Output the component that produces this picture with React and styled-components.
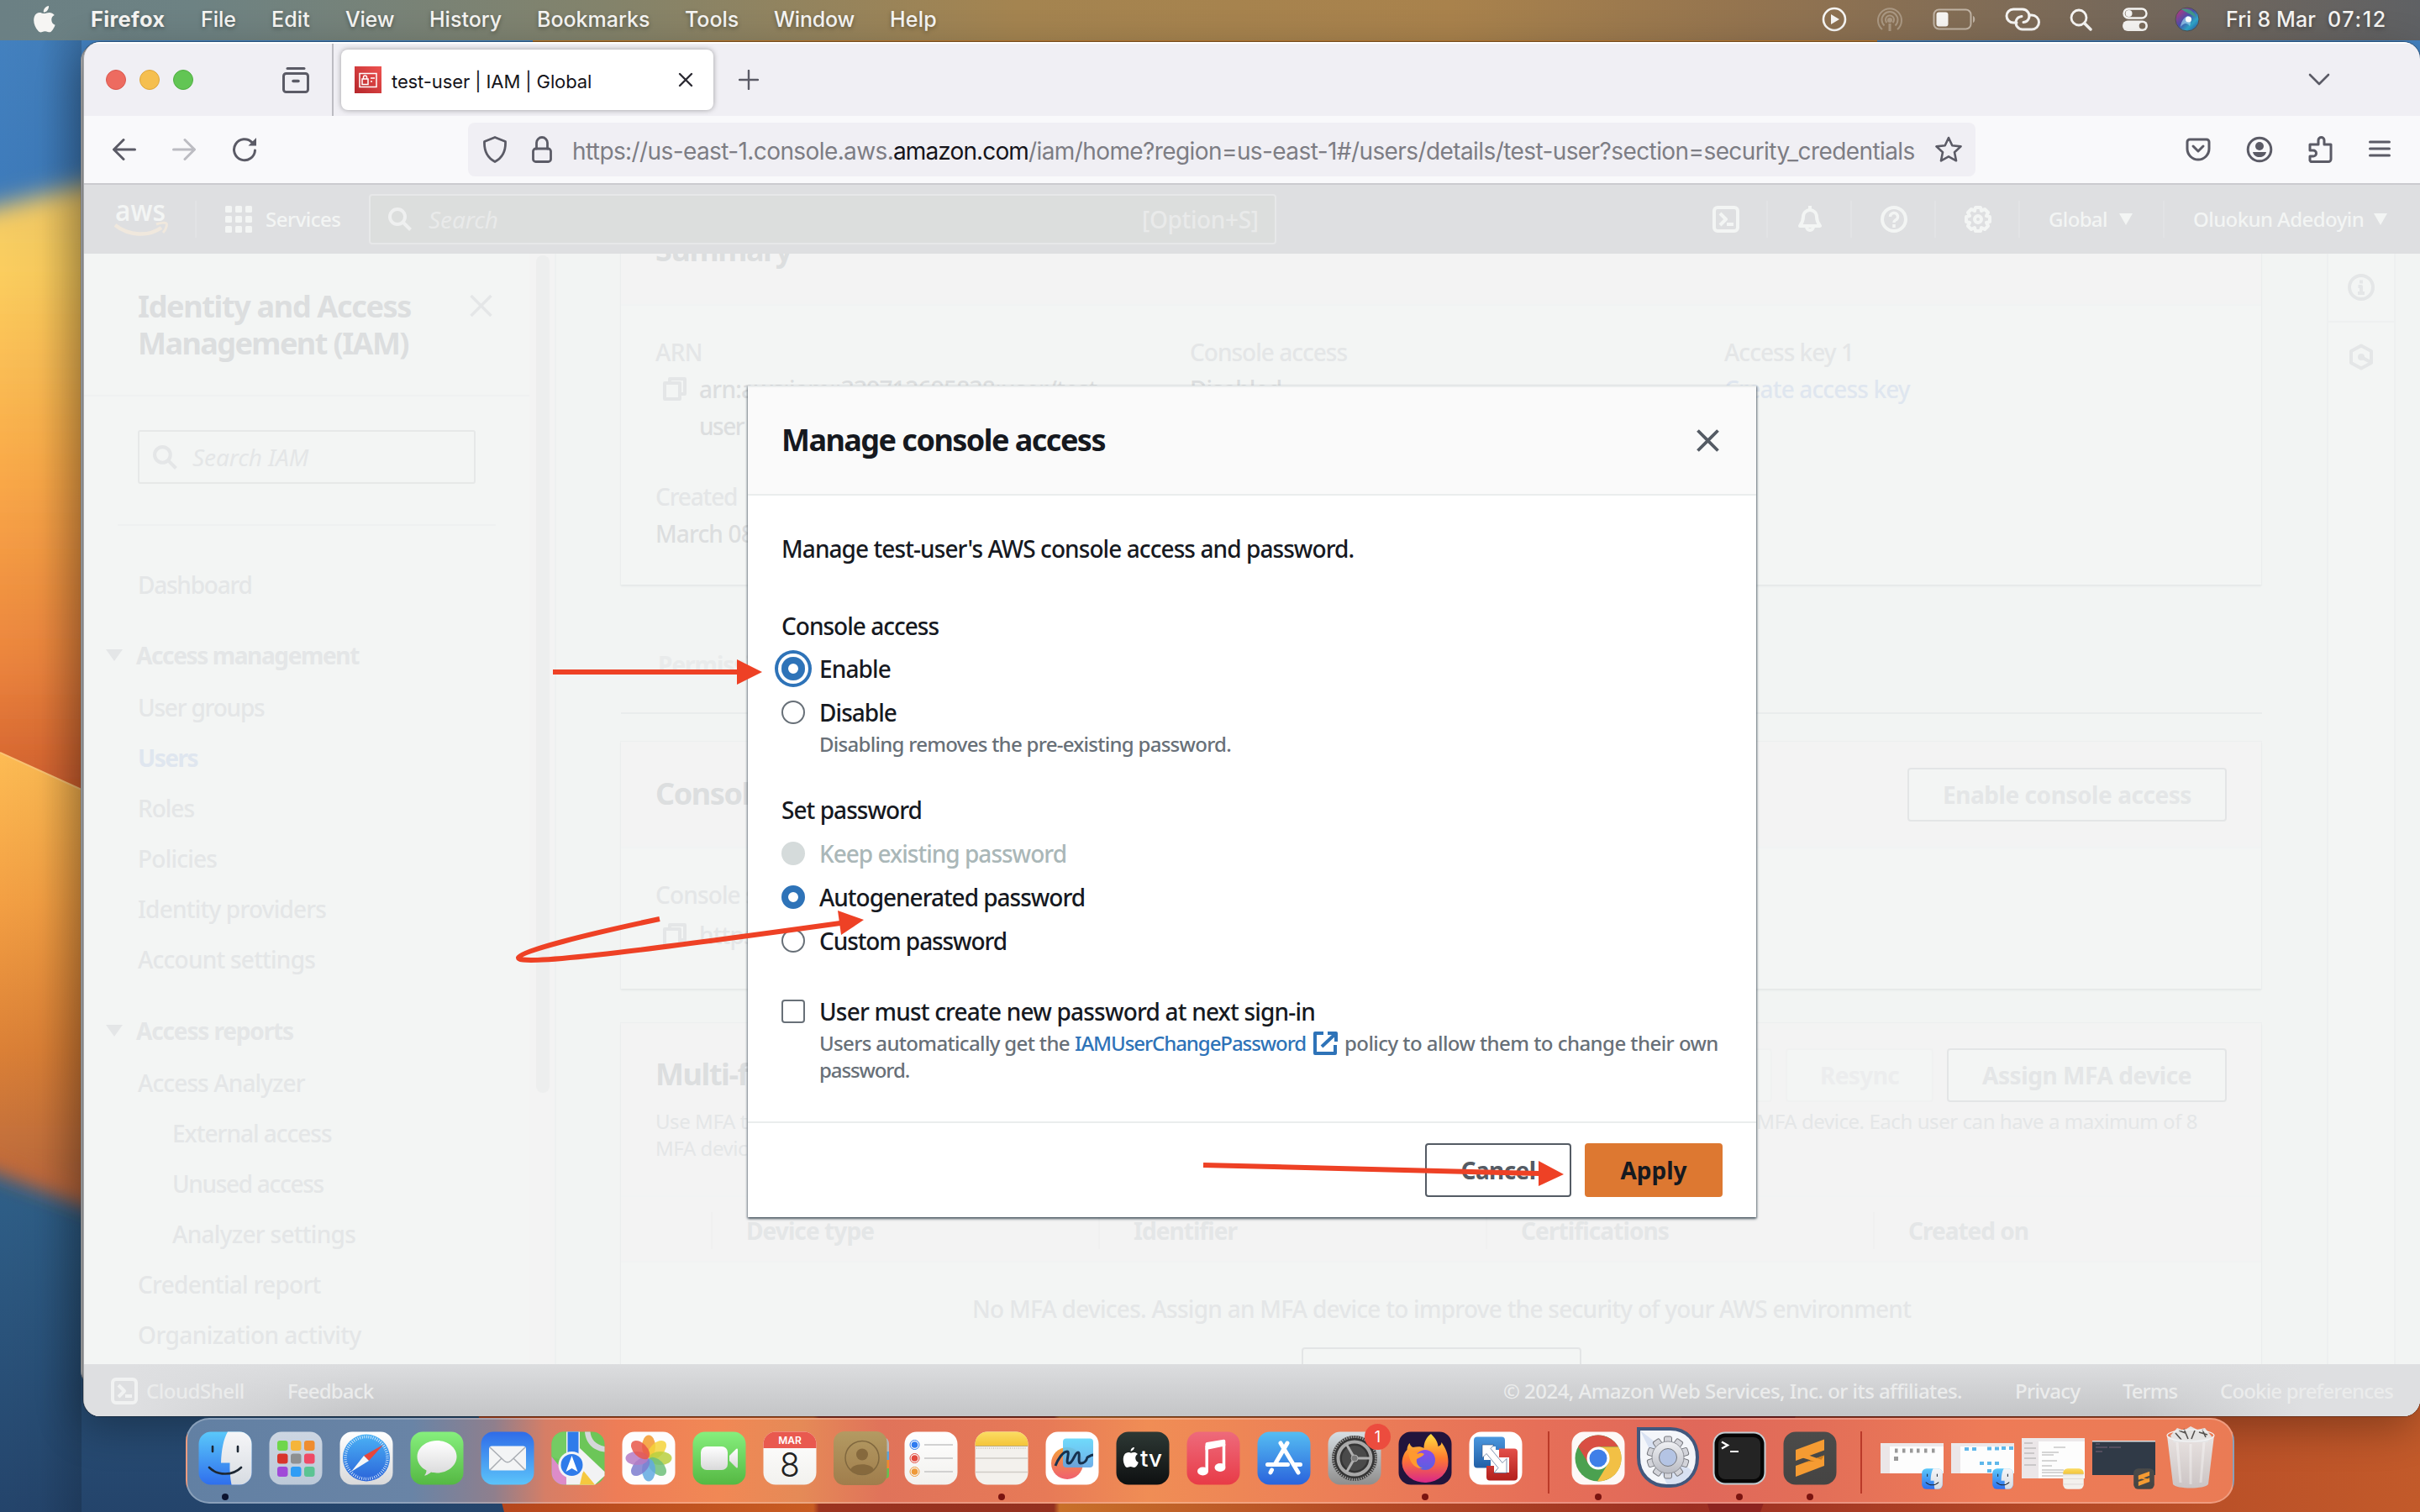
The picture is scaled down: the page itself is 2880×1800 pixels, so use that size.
import React from "react";
import styled, { createGlobalStyle, css } from "styled-components";

const EMBER = `"Noto Sans", "Open Sans", sans-serif`;
const SYSTEM = `Inter, Roboto, sans-serif`;

const Global = createGlobalStyle`
  * { box-sizing: border-box; }
  body { margin: 0; background: #27486c; font-family: ${EMBER}; }
`;

const c = {
  page: "#f2f4f3",
  card: "#f3f5f4",
  head: "#f3f3f3",
  line: "#ebeded",
  faint: "#e4e6e7",
  soft: "#dcdedf",
  link: "#dfe6ef",
  bar: "#dedfe1",
  barText: "#f3f5f4",
  ink: "#16191f",
  grey: "#687078",
  blue: "#2e73b8",
  slate: "#545b64",
  chrome: "#5b5b66",
  arrow: "#ee4125",
};

/* ---------- text ---------- */

const T = styled.span`
  display: block;
  flex: none;
  white-space: nowrap;
  width: ${(p) => (p.$w ? `${p.$w}px` : "auto")};
  margin-left: ${(p) => p.$ml || 0}px;
  font-family: ${(p) => (p.$system ? SYSTEM : EMBER)};
  font-size: ${(p) => p.$s || 28}px;
  line-height: ${(p) => p.$lh || 44}px;
  font-weight: ${(p) => p.$weight || (p.$b ? 700 : p.$system ? 400 : 500)};
  font-style: ${(p) => (p.$i ? "italic" : "normal")};
  letter-spacing: ${(p) => p.$ls ?? (p.$system ? 0 : p.$b ? -1 : -0.85)}px;
  color: ${(p) => p.$c || "inherit"};
`;
const Heading = styled(T).attrs({ $s: 36, $b: true })`
  position: relative;
  top: 2px;
`;
const Small = styled(T).attrs({ $s: 24 })``;

/* ---------- desktop ---------- */

const Desktop = styled.div`
  position: relative;
  width: 2880px;
  height: 1800px;
  overflow: hidden;
`;

const WallpaperSvg = styled.svg`
  position: absolute;
  inset: 0;
`;

function Wallpaper() {
  return (
    <WallpaperSvg width="2880" height="1800" viewBox="0 0 2880 1800">
      <defs>
        <linearGradient id="sky" x1="0" y1="0" x2="0" y2="1">
          <stop offset="0" stopColor="#4482c0" />
          <stop offset="0.14" stopColor="#3d7aba" />
          <stop offset="0.76" stopColor="#30628b" />
          <stop offset="1" stopColor="#24446b" />
        </linearGradient>
        <linearGradient id="petalA" x1="0" y1="220" x2="0" y2="930" gradientUnits="userSpaceOnUse">
          <stop offset="0" stopColor="#f0c968" />
          <stop offset="0.14" stopColor="#fbce5e" />
          <stop offset="0.5" stopColor="#f9a747" />
          <stop offset="0.8" stopColor="#eb843d" />
          <stop offset="1" stopColor="#d4622f" />
        </linearGradient>
        <linearGradient id="petalB" x1="0" y1="900" x2="0" y2="1400" gradientUnits="userSpaceOnUse">
          <stop offset="0" stopColor="#fdbb53" />
          <stop offset="0.35" stopColor="#f39f43" />
          <stop offset="0.7" stopColor="#db8036" />
          <stop offset="1" stopColor="#bb6a3c" />
        </linearGradient>
        <linearGradient id="shade" x1="0" y1="0" x2="1" y2="0">
          <stop offset="0" stopColor="#000" stopOpacity="0" />
          <stop offset="0.5" stopColor="#000" stopOpacity="0.02" />
          <stop offset="1" stopColor="#000" stopOpacity="0.16" />
        </linearGradient>
        <linearGradient id="top" x1="0" y1="0" x2="2880" y2="0" gradientUnits="userSpaceOnUse">
          <stop offset="0" stopColor="#6b8084" />
          <stop offset="0.08" stopColor="#6d8283" />
          <stop offset="0.25" stopColor="#83836b" />
          <stop offset="0.42" stopColor="#a48450" />
          <stop offset="0.6" stopColor="#a9824c" />
          <stop offset="0.72" stopColor="#94744f" />
          <stop offset="0.85" stopColor="#7b6a58" />
          <stop offset="1" stopColor="#5f6164" />
        </linearGradient>
        <linearGradient id="floor" x1="590" y1="0" x2="2880" y2="0" gradientUnits="userSpaceOnUse">
          <stop offset="0" stopColor="#b5461d" />
          <stop offset="0.165" stopColor="#c85c22" />
          <stop offset="0.168" stopColor="#9c3420" />
          <stop offset="0.29" stopColor="#93301f" />
          <stop offset="0.293" stopColor="#c8702a" />
          <stop offset="0.45" stopColor="#b44a25" />
          <stop offset="0.62" stopColor="#9c2f22" />
          <stop offset="0.8" stopColor="#b44826" />
          <stop offset="1" stopColor="#c25a2a" />
        </linearGradient>
        <filter id="soft" x="-50%" y="-10%" width="200%" height="120%">
          <feGaussianBlur stdDeviation="14" />
        </filter>
      </defs>
      <rect width="2880" height="1800" fill="url(#sky)" />
      <path d="M-60 260 L160 205 V1450 L-60 1370Z" fill="url(#petalA)" filter="url(#soft)" />
      <path d="M-60 1000 H160 V1450 L-60 1365Z" fill="url(#petalB)" filter="url(#soft)" />
      <path d="M0 896 L97 940 V1340 H0Z" fill="url(#petalB)" />
      <path d="M0 896 L97 940" stroke="#fbc474" strokeWidth="2" />
      <path d="M560 1650 H2880 V1800 H600Z" fill="url(#floor)" />
      <path d="M1990 1650 H2150 L2095 1800 H2035Z" fill="#8d2420" />
      <rect y="48" width="97" height="1752" fill="url(#shade)" />
      <rect x="634" y="46" width="1600" height="8" fill="#b8782f" />
      <rect width="2880" height="48" fill="url(#top)" />
    </WallpaperSvg>
  );
}

/* ---------- macOS menu bar ---------- */

const MenuBar = styled.div`
  position: relative;
  display: flex;
  align-items: center;
  justify-content: space-between;
  height: 48px;
  padding: 0 37px 2px 40px;
  color: #f6f5f3;
  text-shadow: 0 2px 5px rgba(0, 0, 0, 0.35);
`;
const MenuItems = styled.div`
  display: flex;
  align-items: center;
  gap: 42px;
`;
const StatusItems = styled.div`
  display: flex;
  align-items: center;
`;
const Slot = styled.div`
  display: flex;
  align-items: center;
  width: ${(p) => p.$w}px;
`;

const MENUS = [
  ["Firefox", 89, 0.3], ["File", 42, 0], ["Edit", 46, 0.15], ["View", 58, -0.2], ["History", 86, 0],
  ["Bookmarks", 134, 0], ["Tools", 64, 0], ["Window", 96, -0.2], ["Help", 56, 0.2],
];

function TopBar() {
  return (
    <MenuBar>
      <MenuItems>
        <svg width="26" height="32" viewBox="0 0 26 32" fill="#f6f5f3">
          <path d="M18 0c.3 2-.6 4-1.7 5.400-1.200 1.400-2.900 2.400-4.500 2.200-.3-1.900.6-4 1.700-5.200C14.700 1 16.500.2 18 0z" />
          <path d="M24.800 11c-2.600 1.500-3.600 3.200-3.500 5.700.1 2.900 1.600 4.900 4.300 6-.9 2.600-2.100 4.800-3.700 6.800-1.500 1.900-2.900 2.300-5 1.400-2.400-1-4.300-1-6.600.1-1.900.9-3.400.5-4.900-1.200C1.300 25.300-1 18.300.800 13 2.200 9 6 7.300 9.400 8.500c2.300.8 3.800.8 6 0 3.400-1.300 7.100-.6 9.400 2.500z" />
        </svg>
        {MENUS.map(([t, w, ls], i) => (
          <T key={t} $system $s={i ? 25 : 25.5} $w={w} $ls={ls} $weight={i ? 500 : 700}>{t}</T>
        ))}
      </MenuItems>
      <StatusItems>
        <Slot $w={82}>
          <svg width="30" height="30" viewBox="0 0 30 30">
            <circle cx="15" cy="15" r="13" fill="none" stroke="#f6f5f3" strokeWidth="2.600" />
            <path d="M11 9l10 6-10 6z" fill="#f6f5f3" />
          </svg>
        </Slot>
        <Slot $w={50}>
          <svg width="32" height="30" viewBox="0 0 32 30" fill="none" stroke="#b9aa98" strokeWidth="2" opacity=".7" transform="translate(-17 0)">
            <path d="M7 27a14 14 0 1 1 18 0M9.500 22.500a9.500 9.500 0 1 1 13 0M12.500 19a5 5 0 1 1 7 0" />
            <circle cx="16" cy="16" r="2" fill="#b9aa98" />
            <path d="M16 20v9" strokeWidth="3" />
          </svg>
        </Slot>
        <Slot $w={85}>
          <svg width="52" height="26" viewBox="0 0 52 26">
            <rect x="1.500" y="1.500" width="44" height="23" rx="6" fill="none" stroke="#c0b3a4" strokeWidth="2" />
            <rect x="4.500" y="4.500" width="14" height="17" rx="3" fill="#f6f5f3" />
            <path d="M48 9c3 1 3 7 0 8z" fill="#c0b3a4" />
          </svg>
        </Slot>
        <Slot $w={78}>
          <svg width="44" height="28" viewBox="0 0 44 28" fill="none" stroke="#f6f5f3" strokeWidth="3" strokeLinecap="round">
            <path d="M15 18h-4a8 8 0 0 1 0-16h11a8 8 0 0 1 7.600 10.500c-.8 2.600-3 4.600-6.600 5" />
            <path d="M30 9h3a8 8 0 0 1 0 17H22a8 8 0 0 1-7.600-10.500c.8-2.600 3-4.600 6.600-5" />
          </svg>
        </Slot>
        <Slot $w={63}>
          <svg width="27" height="27" viewBox="0 0 27 27" fill="none" stroke="#f6f5f3" strokeWidth="2.800" strokeLinecap="round">
            <circle cx="11" cy="11" r="9" />
            <path d="M18 18l7 7" strokeWidth="3.500" />
          </svg>
        </Slot>
        <Slot $w={62}>
          <svg width="30" height="28" viewBox="0 0 30 28">
            <rect x="1.500" y="1.500" width="27" height="11" rx="5.500" fill="none" stroke="#f6f5f3" strokeWidth="2.400" />
            <circle cx="7.500" cy="7" r="4" fill="#f6f5f3" />
            <rect x="0" y="15.500" width="30" height="12.500" rx="6.200" fill="#f6f5f3" />
            <circle cx="23.500" cy="21.700" r="3.800" fill="#7b6c5c" />
          </svg>
        </Slot>
        <Slot $w={61}>
          <svg width="30" height="30" viewBox="0 0 30 30">
            <defs>
              <linearGradient id="siri" x1="0" y1="0" x2="1" y2="1">
                <stop offset="0" stopColor="#d5326e" />
                <stop offset=".45" stopColor="#4a4fae" />
                <stop offset=".7" stopColor="#2fa7c8" />
                <stop offset="1" stopColor="#2a3fa0" />
              </linearGradient>
            </defs>
            <circle cx="15" cy="15" r="14" fill="url(#siri)" stroke="#4f5050" />
            <path d="M8 3c8-2 17 3 17 10-6-5-12-6-17-10z" fill="#3f9d86" opacity=".9" />
            <path d="M7 24c1-8 5-12 9-13 3 3 4 8 2 12-4-5-7-3-11 1z" fill="#9fd8f4" opacity=".7" />
            <circle cx="16.500" cy="15" r="3.500" fill="#fff" />
          </svg>
        </Slot>
        <Slot $w={121}><T $system $s={25} $weight={500} $ls={0.1}>Fri 8 Mar</T></Slot>
        <T $system $s={25} $weight={500} $w={73} $ls={1.7}>07:12</T>
      </StatusItems>
    </MenuBar>
  );
}

/* ---------- browser window ---------- */

const BackWindow = styled.div`
  position: absolute;
  left: 96px;
  top: 54px;
  width: 60px;
  height: 1596px;
  border-radius: 18px;
  background: #c9cacc;
  border-left: 1px solid #8f9194;
`;
const Window = styled.div`
  position: absolute;
  left: 99px;
  top: 50px;
  width: 2781px;
  height: 1636px;
  border-radius: 20px;
  overflow: hidden;
  display: flex;
  flex-direction: column;
  background: #f0eff4;
  border-left: 1px solid #a9abae;
  box-shadow: 0 0 0 1px rgba(0, 0, 0, 0.3), -6px 14px 50px rgba(0, 0, 0, 0.3);
`;
const TabStrip = styled.div`
  display: flex;
  align-items: center;
  height: 88px;
  flex: none;
  border-top: 2px solid #fff;
  padding-left: 26px;
`;
const Light = styled.i`
  width: 24px;
  height: 24px;
  flex: none;
  margin-right: 16px;
  border-radius: 50%;
  background: ${(p) => p.$c};
  border: 1px solid ${(p) => p.$edge};
`;
const ViewButton = styled.div`
  display: flex;
  align-items: center;
  margin-left: 90px;
  width: 61px;
  height: 86px;
  margin-right: 9px;
  border-right: 2px solid #bcbcc2;
  flex: none;
`;
const Tab = styled.div`
  display: flex;
  align-items: center;
  width: 443px;
  height: 72px;
  padding: 0 24px 0 16px;
  border-radius: 8px;
  background: #fff;
  box-shadow: 0 0 6px rgba(0, 0, 0, 0.35);
  gap: 12px;
  & > svg:last-child { margin-left: auto; }
  & > span { margin-top: 3px; }
`;
const NewTab = styled.div`
  margin-left: 30px;
  display: flex;
`;
const TabsMenu = styled.div`
  margin-left: auto;
  margin-right: 107px;
  display: flex;
`;
const Toolbar = styled.div`
  display: flex;
  align-items: center;
  height: 82px;
  flex: none;
  background: #f9f9fb;
  border-bottom: 2px solid #cbcbcf;
  padding-left: 34px;
`;
const NavButtons = styled.div`
  display: flex;
  align-items: center;
  gap: 43px;
  width: 423px;
`;
const UrlBar = styled.div`
  display: flex;
  align-items: center;
  width: 1794px;
  height: 64px;
  border-radius: 8px;
  background: #f0eff4;
  padding: 0 16px;
`;
const UrlIcons = styled.div`
  display: flex;
  align-items: center;
  gap: 28px;
  width: 108px;
  flex: none;
`;
const UrlText = styled.div`
  display: flex;
  color: #7d7d84;
  width: 1622px;
  padding-top: 3px;
`;
const ToolbarActions = styled.div`
  display: flex;
  align-items: center;
  gap: 42px;
  margin-left: auto;
  margin-right: 35px;
`;

const line = (extra) => ({ fill: "none", stroke: c.chrome, strokeWidth: 3, strokeLinecap: "round", strokeLinejoin: "round", ...extra });

function Browser() {
  return (
    <>
      <TabStrip>
        <Light $c="#ed6b60" $edge="#d9584f" />
        <Light $c="#f5bf4f" $edge="#dea63b" />
        <Light $c="#62c554" $edge="#4fae41" />
        <ViewButton>
          <svg width="32" height="32" viewBox="0 0 32 32" {...line()}>
            <path d="M6 2.500h20" /><rect x="1.500" y="8.500" width="29" height="22" rx="3" /><path d="M13 17.500h6" strokeWidth="3.500" />
          </svg>
        </ViewButton>
        <Tab>
          <svg width="32" height="32" viewBox="0 0 32 32">
            <defs><linearGradient id="iam" x1="0" y1="1" x2="1" y2="0"><stop offset="0" stopColor="#b5262b" /><stop offset="1" stopColor="#ef5350" /></linearGradient></defs>
            <rect width="32" height="32" fill="url(#iam)" />
            <g fill="none" stroke="#fff" strokeWidth="1.500">
              <rect x="6" y="8.500" width="20" height="16" /><rect x="9" y="15" width="7" height="6.500" /><path d="M10.500 15v-2a2 2 0 0 1 4 0v2M19 14h5M19 18h2" />
            </g>
          </svg>
          <T $system $s={22} $w={239} $ls={-0.1} $c="#15141a">test-user | IAM | Global</T>
          <svg width="18" height="18" viewBox="0 0 18 18" {...line({ stroke: "#2b2a33", strokeWidth: 2.4 })}><path d="M2 2l14 14M16 2L2 16" /></svg>
        </Tab>
        <NewTab><svg width="24" height="24" viewBox="0 0 24 24" {...line({ strokeWidth: 2.4 })}><path d="M12 1v22M1 12h22" /></svg></NewTab>
        <TabsMenu><svg width="26" height="16" viewBox="0 0 26 16" {...line({ strokeWidth: 2.6 })}><path d="M2 2l11 11L24 2" /></svg></TabsMenu>
      </TabStrip>
      <Toolbar>
        <NavButtons>
          <svg width="28" height="26" viewBox="0 0 28 26" {...line()}><path d="M26.500 13H2M13 1.500L1.500 13 13 24.500" /></svg>
          <svg width="28" height="26" viewBox="0 0 28 26" {...line({ stroke: "#bcbcc2" })}><path d="M1.500 13H26M15 1.500L26.500 13 15 24.500" /></svg>
          <svg width="30" height="30" viewBox="0 0 30 30" {...line()}>
            <path d="M27.500 16a12.500 12.500 0 1 1-3.500-9.500" /><path d="M29 1v9.500H19.500z" fill={c.chrome} stroke="none" />
          </svg>
        </NavButtons>
        <UrlBar>
          <UrlIcons>
            <svg width="32" height="32" viewBox="0 0 32 32" {...line({ strokeWidth: 2.8 })}><path d="M16 1.500l12.500 5C29 18 25 26 16 30.500 7 26 3 18 3.500 6.500z" /></svg>
            <svg width="24" height="32" viewBox="0 0 24 32" {...line({ strokeWidth: 2.8 })}><rect x="1.500" y="15" width="21" height="15.500" rx="3" /><path d="M5.500 15V8a6.500 6.500 0 0 1 13 0v7" /></svg>
          </UrlIcons>
          <UrlText>
            <T $system $s={28} $w={382} $ls={-0.6}>https://us-east-1.console.aws.</T>
            <T $system $s={28} $w={161} $ls={-0.88} $c="#15141a">amazon.com</T>
            <T $system $s={28} $w={1055} $ls={-0.59}>/iam/home?region=us-east-1#/users/details/test-user?section=security_credentials</T>
          </UrlText>
          <svg width="32" height="32" viewBox="0 0 32 32" {...line({ strokeWidth: 2.6 })}>
            <path d="M16 2l4.300 9.200 10.200 1.200-7.500 6.900 2 10L16 24.400l-9 4.900 2-10-7.500-6.900 10.200-1.200z" />
          </svg>
        </UrlBar>
        <ToolbarActions>
          <svg width="30" height="28" viewBox="0 0 30 28" {...line()}><path d="M5 2h20a3 3 0 0 1 3 3v8a13 13 0 0 1-26 0V5a3 3 0 0 1 3-3z" /><path d="M9 10l6 6 6-6" /></svg>
          <svg width="32" height="32" viewBox="0 0 32 32"><circle cx="16" cy="16" r="13.800" fill="none" stroke={c.chrome} strokeWidth="3" /><circle cx="16" cy="12" r="5" fill={c.chrome} /><path d="M8 19h16c-1 4-4 6-8 6s-7-2-8-6z" fill={c.chrome} /></svg>
          <svg width="30" height="32" viewBox="0 0 30 32" {...line()}><path d="M3 30.500h21a3 3 0 0 0 3-3V10h-8V5a3.500 3.500 0 0 0-7 0v5H2v7h4a3.500 3.500 0 0 1 0 7H2v5z" /></svg>
          <svg width="26" height="22" viewBox="0 0 26 22" {...line()}><path d="M1.500 2h23M1.500 10h23M1.500 18h23" /></svg>
        </ToolbarActions>
      </Toolbar>
    </>
  );
}

/* ---------- AWS console page ---------- */

const Page = styled.div`
  position: relative;
  display: flex;
  flex-direction: column;
  height: 1466px;
  background: ${c.page};
`;
const AwsHeader = styled.div`
  display: flex;
  align-items: center;
  height: 82px;
  flex: none;
  background: ${c.bar};
  color: ${c.barText};
  padding-left: 36px;
`;
const Sep = styled.i`
  width: 2px;
  height: 44px;
  background: #e2e3e5;
  margin: 0 ${(p) => p.$r}px 0 ${(p) => p.$l}px;
`;
const SearchBox = styled.div`
  display: flex;
  align-items: center;
  width: 1080px;
  height: 60px;
  margin-left: 34px;
  padding: 0 19px 0 21px;
  border: 2px solid #e7e8e9;
  border-radius: 4px;
  background: #dcdedd;
  color: #e9eaea;
`;
const SearchHint = styled.div`
  flex: 1;
  margin-left: 20px;
`;
const HeaderTools = styled.div`
  display: flex;
  align-items: center;
  margin-left: 519px;
`;
const Caret = styled.i`
  margin-left: ${(p) => p.$ml || 0}px;
  border-left: ${(p) => p.$s || 8}px solid transparent;
  border-right: ${(p) => p.$s || 8}px solid transparent;
  border-top: 14px solid currentColor;
`;

const stroke = (color, w = 4) => ({ fill: "none", stroke: color, strokeWidth: w, strokeLinejoin: "round" });

const ShellIcon = ({ color }) => (
  <svg width="32" height="32" viewBox="0 0 32 32" {...stroke(color)}>
    <rect x="2" y="2" width="28" height="28" rx="4" /><path d="M9 9l7 7-7 7" /><path d="M17 22h8" />
  </svg>
);
const CopyIcon = () => (
  <svg width="28" height="28" viewBox="0 0 28 28" {...stroke(c.faint, 4)}>
    <rect x="2" y="7" width="18" height="19" /><path d="M8 7V2h18v18h-6" />
  </svg>
);
const SearchIcon = ({ color, size = 28 }) => (
  <svg width={size} height={size} viewBox="0 0 28 28" {...stroke(color, 4)}>
    <circle cx="11" cy="11" r="9" /><path d="M17.500 17.500l9 9" />
  </svg>
);

function Header() {
  return (
    <AwsHeader>
      <svg width="64" height="44" viewBox="0 0 64 44">
        <text x="1" y="24" textLength="60" lengthAdjust="spacingAndGlyphs" fontFamily="Open Sans" fontWeight="600" fontSize="35" fill={c.barText}>aws</text>
        <path d="M1 29c16 13 40 14 55 3" fill="none" stroke="#f0e8dd" strokeWidth="4.500" />
        <path d="M50 28c5-2 11-2 12-1s0 7-4 11" fill="none" stroke="#f0e8dd" strokeWidth="3" />
      </svg>
      <Sep $l={32} $r={34} />
      <svg width="32" height="32" viewBox="0 0 32 32" fill={c.barText}>
        {[0, 12, 24].map((y) => [0, 12, 24].map((x) => <rect key={`${x}-${y}`} x={x} y={y} width="8" height="8" rx="1.500" />))}
      </svg>
      <Small $ml={16} $w={89} $ls={-0.5}>Services</Small>
      <SearchBox>
        <SearchIcon color="#eff0f0" />
        <SearchHint><T $i $w={84} $ls={-0.1} $weight={400}>Search</T></SearchHint>
        <T $w={139} $ls={-0.35}>[Option+S]</T>
      </SearchBox>
      <HeaderTools>
        <ShellIcon color={c.barText} />
        <Sep $l={32} $r={34} />
        <svg width="32" height="32" viewBox="0 0 32 32" {...stroke(c.barText)}><path d="M4 24c3-4 4-6 4-11a8 8 0 0 1 16 0c0 5 1 7 4 11z" /><path d="M16 0v6M12 25a4 4 0 0 0 8 0" /></svg>
        <Sep $l={32} $r={34} />
        <svg width="32" height="32" viewBox="0 0 32 32" {...stroke(c.barText)}><circle cx="16" cy="16" r="14" /><path d="M11.500 13a4.500 4.500 0 1 1 6 4.200c-1 .5-1.500 1-1.500 2.800M16 22v4" strokeWidth="3.500" /></svg>
        <Sep $l={32} $r={34} />
        <svg width="32" height="32" viewBox="0 0 32 32" {...stroke(c.barText)}><path d="M13 2h6l1 4 4-2 4 4-2 4 4 1v6l-4 1 2 4-4 4-4-2-1 4h-6l-1-4-4 2-4-4 2-4-4-1v-6l4-1-2-4 4-4 4 2z" /><circle cx="16" cy="16" r="4" /></svg>
        <Sep $l={32} $r={34} />
        <Small $w={70} $ls={-0.65}>Global</Small>
        <Caret $ml={14} />
        <Sep $l={36} $r={34} />
        <Small $w={203} $ls={-0.58}>Oluokun Adedoyin</Small>
        <Caret $ml={12} />
      </HeaderTools>
    </AwsHeader>
  );
}

const Body = styled.div`
  display: flex;
  height: 1322px;
  flex: none;
  overflow: hidden;
`;
const Sidebar = styled.nav`
  width: 530px;
  flex: none;
  background: ${c.card};
`;
const SideTitle = styled.div`
  display: flex;
  justify-content: space-between;
  height: 170px;
  padding: 39px 44px 0 64px;
  border-bottom: 2px solid #eff1f1;
  & > svg { margin-top: 10px; }
`;
const SideSearch = styled.div`
  margin: 0 40px 40px;
  padding: 40px 24px 48px;
  border-bottom: 2px solid #eff1f1;
`;
const SideInput = styled.div`
  display: flex;
  align-items: center;
  gap: 18px;
  height: 64px;
  width: 402px;
  padding-left: 16px;
  border: 2px solid #e6e8e8;
  border-radius: 3px;
`;
const SideRow = styled.div`
  display: flex;
  align-items: center;
  gap: 16px;
  height: 60px;
  margin-top: ${(p) => p.$gap || 0}px;
  padding-left: ${(p) => (p.$group ? 26 : p.$nested ? 105 : 64)}px;
  color: ${(p) => (p.$active ? c.link : c.faint)};
`;
const Scroll = styled.div`
  width: 32px;
  flex: none;
  background: #f3f3f3;
  border-right: 2px solid #eef0f0;
  padding: 2px 0 0 8px;
`;
const Thumb = styled.div`
  width: 16px;
  height: 997px;
  border-radius: 8px;
  background: #edeeee;
`;

const NAV = [
  { t: "Dashboard", ls: -1.24 },
  { t: "Access management", ls: -1.37, group: true, gap: 24 },
  { t: "User groups", ls: -1.21, gap: 2 },
  { t: "Users", ls: -1.5, active: true },
  { t: "Roles", ls: -1 },
  { t: "Policies", ls: -0.77 },
  { t: "Identity providers", ls: -0.79 },
  { t: "Account settings", ls: -0.76 },
  { t: "Access reports", ls: -1.14, group: true, gap: 25 },
  { t: "Access Analyzer", ls: -0.88, gap: 2 },
  { t: "External access", ls: -1.01, nested: true },
  { t: "Unused access", ls: -1.32, nested: true },
  { t: "Analyzer settings", ls: -0.7, nested: true },
  { t: "Credential report", ls: -0.71 },
  { t: "Organization activity", ls: -0.56 },
];

function SideNav() {
  return (
    <>
      <Sidebar>
        <SideTitle>
          <div>
            <Heading $c={c.soft} $w={325} $ls={-1.33}>Identity and Access</Heading>
            <Heading $c={c.soft} $w={325} $ls={-1.56}>Management (IAM)</Heading>
          </div>
          <svg width="27" height="26" viewBox="0 0 27 26" {...stroke(c.faint, 3.5)}><path d="M1.500 1l24 24M25.500 1l-24 24" /></svg>
        </SideTitle>
        <SideSearch>
          <SideInput>
            <SearchIcon color={c.faint} size={29} />
            <T $i $c={c.faint} $weight={400} $ls={-0.1}>Search IAM</T>
          </SideInput>
        </SideSearch>
        {NAV.map((n) => (
          <SideRow key={n.t} $gap={n.gap} $group={n.group} $nested={n.nested} $active={n.active}>
            {n.group && <Caret $s={10} />}
            <T $b={n.group || n.active} $ls={n.ls}>{n.t}</T>
          </SideRow>
        ))}
      </Sidebar>
      <Scroll><Thumb /></Scroll>
    </>
  );
}

const Main = styled.main`
  width: 2107px;
  flex: none;
  overflow: hidden;
  padding: 0 77px;
`;
const Card = styled.section`
  width: 1952px;
  margin-top: ${(p) => p.$top || 0}px;
  height: ${(p) => p.$h}px;
  background: ${c.card};
  box-shadow: 0 2px 2px #e5e8e8, 0 0 0 1px #edefef;
`;
const CardHead = styled.div`
  display: flex;
  justify-content: space-between;
  height: ${(p) => p.$h}px;
  padding: ${(p) => p.$pt}px 41px 0;
  background: ${c.head};
  border-bottom: 2px solid #f1f3f3;
`;
const Columns = styled.div`
  display: flex;
  padding: 33px 0 0 41px;
`;
const Column = styled.div`
  width: 636px;
  color: ${c.soft};
`;
const Value = styled.div`
  display: flex;
  gap: 15px;
  padding-left: 9px;
  margin-bottom: ${(p) => p.$mb || 0}px;
  margin-top: ${(p) => p.$mt || 0}px;
  & > svg { margin-top: 8px; flex: none; }
`;
const Tabs = styled.div`
  height: 154px;
  padding: 73px 0 0 44px;
  border-bottom: 2px solid #e9ecec;
`;
const SectionTitle = styled.div`
  padding-top: 7px;
`;
const Actions = styled.div`
  display: flex;
  gap: 16px;
`;
const GhostButton = styled.div`
  display: flex;
  align-items: center;
  justify-content: center;
  width: ${(p) => p.$w}px;
  height: 64px;
  flex: none;
  border: 2px solid ${(p) => (p.$off ? "#f0f1f1" : "#e3e5e6")};
  border-radius: 4px;
  background: ${c.card};
  color: ${(p) => (p.$off ? "#ecedee" : c.faint)};
`;
const MfaHead = styled.div`
  height: 207px;
  padding: 30px 41px 0;
  background: ${c.head};
  border-bottom: 2px solid #f1f3f3;
`;
const MfaTop = styled.div`
  display: flex;
  justify-content: space-between;
  height: 71px;
`;
const TableHead = styled.div`
  display: flex;
  align-items: center;
  height: 78px;
  padding: 3px 0 0 107px;
  background: ${c.head};
  border-bottom: 2px solid #f1f3f3;
`;
const Th = styled.div`
  width: 461px;
  flex: none;
  padding-left: 40px;
  border-left: 2px solid #f0f0f0;
`;
const Empty = styled.div`
  display: flex;
  flex-direction: column;
  align-items: center;
  padding-top: 33px;
  gap: 24px;
`;
const Rail = styled.aside`
  width: 82px;
  flex: none;
  background: ${c.card};
  border-left: 2px solid #eef0f0;
  border-right: 2px solid #eef0f0;
`;
const RailItem = styled.div`
  display: flex;
  align-items: center;
  justify-content: center;
  height: 82px;
  border-bottom: ${(p) => (p.$last ? 0 : 2)}px solid #eef0f0;
`;

function Content() {
  return (
    <Main>
      <Card $top={-62} $h={456}>
        <CardHead $h={124} $pt={34}><Heading $c={c.soft} $ls={-1.38}>Summary</Heading></CardHead>
        <Columns>
          <Column>
            <T $c={c.faint} $ls={-0.7}>ARN</T>
            <Value $mb={40}>
              <CopyIcon />
              <div>
                <T $ls={-0.73}>arn:aws:iam::339712695838:user/test-</T>
                <T $ls={-1.5}>user</T>
              </div>
            </Value>
            <T $c={c.faint} $ls={-1.14}>Created</T>
            <T>March 08, 2024, 07:10 (UTC+01:00)</T>
          </Column>
          <Column>
            <T $c={c.faint} $ls={-0.99}>Console access</T>
            <T>Disabled</T>
          </Column>
          <Column>
            <T $c={c.faint} $ls={-0.97}>Access key 1</T>
            <T $c={c.link} $ls={-0.85}>Create access key</T>
          </Column>
        </Columns>
      </Card>
      <Tabs><T $b $c="#e9ebeb">Permissions</T></Tabs>
      <Card $top={33} $h={294}>
        <CardHead $h={127} $pt={31}>
          <SectionTitle><Heading $c={c.soft} $ls={-1.4}>Console sign-in</Heading></SectionTitle>
          <GhostButton $w={380}><T $b $ls={-0.44}>Enable console access</T></GhostButton>
        </CardHead>
        <Columns>
          <Column>
            <T $c={c.faint}>Console sign-in link</T>
            <Value $mt={4}><CopyIcon /><T $c={c.faint}>https://signin.aws.amazon.com/console</T></Value>
          </Column>
        </Columns>
      </Card>
      <Card $top={41} $h={500}>
        <MfaHead>
          <MfaTop>
            <SectionTitle><Heading $c={c.soft} $ls={-1.4}>Multi-factor authentication (MFA) (0)</Heading></SectionTitle>
            <Actions>
              <GhostButton $w={176} $off><T $b>Remove</T></GhostButton>
              <GhostButton $w={176} $off><T $b $ls={-0.6}>Resync</T></GhostButton>
              <GhostButton $w={333}><T $b $ls={-0.43}>Assign MFA device</T></GhostButton>
            </Actions>
          </MfaTop>
          <Small $lh={32} $c={c.faint} $weight={400} $ls={-0.43}>Use MFA to increase the security of your AWS environment. Signing in with MFA requires an authentication code from an MFA device. Each user can have a maximum of 8</Small>
          <Small $lh={32} $c={c.faint} $weight={400} $ls={-0.43}>MFA devices assigned. Learn more</Small>
        </MfaHead>
        <TableHead>
          <Th><T $b $c={c.faint} $ls={-0.91}>Device type</T></Th>
          <Th><T $b $c={c.faint} $ls={-0.95}>Identifier</T></Th>
          <Th><T $b $c={c.faint} $ls={-0.89}>Certifications</T></Th>
          <Th><T $b $c={c.faint} $ls={-1}>Created on</T></Th>
        </TableHead>
        <Empty>
          <T $c={c.faint} $w={1116} $ls={-0.73}>No MFA devices. Assign an MFA device to improve the security of your AWS environment</T>
          <GhostButton $w={333} />
        </Empty>
      </Card>
    </Main>
  );
}

function InfoRail() {
  return (
    <Rail>
      <RailItem>
        <svg width="32" height="32" viewBox="0 0 32 32" {...stroke(c.faint)}><circle cx="16" cy="16" r="14" /><path d="M16 7.500v4M12.500 15H16v8M12 23h8" /></svg>
      </RailItem>
      <RailItem $last>
        <svg width="30" height="32" viewBox="0 0 30 32" {...stroke(c.faint)}><path d="M15 2.500l12 6.500v14l-12 6.500L3 23V9z" /><circle cx="15" cy="16" r="4" fill={c.faint} stroke="none" /><path d="M15 16l11 6" /></svg>
      </RailItem>
    </Rail>
  );
}

const FooterBar = styled.footer`
  display: flex;
  align-items: center;
  height: 62px;
  flex: none;
  padding: 2px 0 0 32px;
  color: #ebecec;
  background: linear-gradient(90deg, #dedfe1 2%, rgba(222, 223, 225, 0) 12%, rgba(222, 223, 225, 0) 88%, #dedfe1 95%),
    linear-gradient(180deg, #dcdddf, #c4c5c7);
`;

function Footer() {
  return (
    <FooterBar>
      <ShellIcon color="#f1f2f2" />
      <Small $w={117} $ml={10} $ls={-0.46}>CloudShell</Small>
      <Small $w={102} $ml={51} $ls={-0.83}>Feedback</Small>
      <Small $w={549} $ml={1345} $ls={-0.55}>© 2024, Amazon Web Services, Inc. or its affiliates.</Small>
      <Small $w={78} $ml={60} $ls={-0.66}>Privacy</Small>
      <Small $w={66} $ml={50} $ls={-1}>Terms</Small>
      <Small $w={206} $ml={50} $ls={-0.82}>Cookie preferences</Small>
    </FooterBar>
  );
}

/* ---------- dialog ---------- */

const Dialog = styled.div`
  position: absolute;
  left: 790px;
  top: 239px;
  width: 1200px;
  height: 990px;
  display: flex;
  flex-direction: column;
  background: #fff;
  color: ${c.ink};
  border-top: 2px solid #eaeded;
  box-shadow: 0 2px 3px rgba(60, 75, 85, 0.75), 1px 1px 2px rgba(60, 75, 85, 0.5), -1px 1px 2px rgba(60, 75, 85, 0.35);
`;
const DialogHead = styled.div`
  display: flex;
  justify-content: space-between;
  height: 129px;
  flex: none;
  padding: 39px 44px 0 40px;
  background: #fafafa;
  border-bottom: 2px solid #eaeded;
  & > svg { margin-top: 11px; }
`;
const DialogBody = styled.div`
  flex: 1;
  padding: 41px 40px 0;
`;
const Section = styled.div`
  margin-top: ${(p) => p.$top}px;
`;
const Option = styled.div`
  display: flex;
  align-items: center;
  gap: 17px;
  height: 44px;
  margin-top: ${(p) => p.$top ?? 8}px;
  color: ${(p) => (p.$off ? "#aab7b8" : c.ink)};
`;
const Radio = styled.i`
  width: 28px;
  height: 28px;
  border-radius: 50%;
  border: 2px solid #687078;
  ${(p) => p.$state === "off" && css`background: #d5dbdb; border-color: #d5dbdb;`}
  ${(p) => p.$state === "on" && css`border: 8px solid ${c.blue};`}
  ${(p) => p.$focus && css`box-shadow: 0 0 0 4px #fff, 0 0 0 8px ${c.blue};`}
`;
const Checkbox = styled.i`
  width: 28px;
  height: 28px;
  border: 2px solid #687078;
  border-radius: 4px;
`;
const Hint = styled.div`
  display: flex;
  align-items: center;
  margin-left: 45px;
  color: ${c.grey};
`;
const DialogFoot = styled.div`
  display: flex;
  justify-content: flex-end;
  gap: 16px;
  height: 114px;
  flex: none;
  padding: 24px 40px 0;
  border-top: 2px solid #eaeded;
`;
const Button = styled.div`
  display: flex;
  align-items: center;
  justify-content: center;
  width: ${(p) => p.$w}px;
  height: 64px;
  border-radius: 4px;
  border: 2px solid ${(p) => (p.$primary ? "#dd7831" : c.slate)};
  background: ${(p) => (p.$primary ? "#dd7831" : "#fff")};
  color: ${(p) => (p.$primary ? c.ink : c.slate)};
`;

function AccessDialog() {
  return (
    <Dialog>
      <DialogHead>
        <Heading $ls={-1.53}>Manage console access</Heading>
        <svg width="27" height="27" viewBox="0 0 27 27" {...stroke(c.slate, 3.8)}><path d="M1.500 1.500l24 24M25.500 1.500l-24 24" /></svg>
      </DialogHead>
      <DialogBody>
        <T $ls={-0.92}>Manage test-user's AWS console access and password.</T>
        <Section $top={48}>
          <T $ls={-0.99}>Console access</T>
          <Option $top={7}><Radio $state="on" $focus /><T $ls={-0.86}>Enable</T></Option>
          <Option><Radio /><T $ls={-0.95}>Disable</T></Option>
          <Hint><Small $lh={32} $ls={-0.72}>Disabling removes the pre-existing password.</Small></Hint>
        </Section>
        <Section $top={40}>
          <T $ls={-0.95}>Set password</T>
          <Option $off><Radio $state="off" /><T $ls={-0.99}>Keep existing password</T></Option>
          <Option><Radio $state="on" /><T $ls={-1.02}>Autogenerated password</T></Option>
          <Option><Radio /><T $ls={-1.1}>Custom password</T></Option>
        </Section>
        <Section $top={40}>
          <Option $top={0}><Checkbox /><T $ls={-0.8}>User must create new password at next sign-in</T></Option>
          <Hint>
            <Small $lh={32} $w={304} $ls={-0.65}>Users automatically get the</Small>
            <Small $lh={32} $w={284} $ls={-1.07} $c={c.blue}>IAMUserChangePassword</Small>
            <svg width="29" height="28" viewBox="0 0 29 28" {...stroke(c.blue)}><path d="M12 2H2v24h24V16M17 2h10v10M26 3L10 18" /></svg>
            <Small $lh={32} $ml={8} $w={446} $ls={-0.55}>policy to allow them to change their own</Small>
          </Hint>
          <Hint><Small $lh={32} $ls={-1.1}>password.</Small></Hint>
        </Section>
      </DialogBody>
      <DialogFoot>
        <Button $w={174}><T $b $ls={-0.58}>Cancel</T></Button>
        <Button $w={164} $primary><T $b $ls={0}>Apply</T></Button>
      </DialogFoot>
    </Dialog>
  );
}

/* ---------- arrows drawn over the screen ---------- */

const Marks = styled.svg`
  position: absolute;
  inset: 0;
`;
function Arrows() {
  return (
    <Marks width="2880" height="1800" viewBox="0 0 2880 1800" fill="none" stroke={c.arrow} strokeWidth="6">
      <path d="M658 800H880" />
      <path d="M877 785l30 15-30 15z" fill={c.arrow} stroke="none" />
      <path d="M785 1094C700 1112 620 1132 617 1140C616 1150 740 1135 1000 1099" />
      <path d="M997 1084l31 11-27 18z" fill={c.arrow} stroke="none" />
      <path d="M1432 1387L1832 1397" />
      <path d="M1831 1382l30 16-30 14z" fill={c.arrow} stroke="none" />
    </Marks>
  );
}

/* ---------- dock ---------- */

const DockBar = styled.div`
  position: absolute;
  left: 221px;
  top: 1688px;
  width: 2438px;
  height: 102px;
  display: flex;
  align-items: flex-start;
  padding: 14px 0 0 13px;
  border-radius: 28px;
  border: 2px solid rgba(255, 255, 255, 0.25);
  background: linear-gradient(90deg, #6280a3 0, #6984a6 11%, #8f7f8d 15%, #d67e66 17.5%, #ee7d57 21%, #f18855 26%, #e58a57 30%, #e0735a 34%, #e77a57 42%, #f08d55 47%, #ec7f57 56%, #e66f58 66%, #e0685a 74%, #e36f58 80%, #ee7b57 88%, #ea7b55 100%);
`;
const DockItem = styled.div`
  position: relative;
  width: 84px;
  height: 84px;
  flex: none;
`;
const Dot = styled.i`
  position: absolute;
  left: 28px;
  top: 74px;
  width: 8px;
  height: 8px;
  border-radius: 50%;
  background: ${(p) => p.$c || "#7a1410"};
`;
const DockSep = styled.i`
  width: 2px;
  height: 74px;
  flex: none;
  margin-right: ${(p) => p.$r}px;
  margin-left: ${(p) => p.$l}px;
  background: #ba3a29;
`;
const Badge = styled.div`
  position: absolute;
  left: 44px;
  top: -9px;
  width: 31px;
  height: 31px;
  border-radius: 50%;
  background: #ec4c3e;
  display: flex;
  align-items: center;
  justify-content: center;
`;
const Thumbnail = styled.div`
  position: relative;
  width: 84px;
  height: 84px;
  flex: none;
`;
const MiniApp = styled.div`
  position: absolute;
  left: 49px;
  top: 44px;
  display: flex;
`;
const Overhang = styled.svg`
  flex: none;
  margin: ${(p) => p.$m};
`;

const Tile = ({ fill, children, size = 64 }) => (
  <svg width={size} height={size} viewBox="0 0 64 64"><rect x=".5" y=".5" width="63" height="63" rx="14.500" fill={fill} />{children}</svg>
);
const Grad = ({ id, a, b, m }) => (
  <linearGradient id={id} x1="0" y1="0" x2="0" y2="1"><stop offset="0" stopColor={a} />{m && <stop offset=".5" stopColor={m} />}<stop offset="1" stopColor={b} /></linearGradient>
);
const Hidden = styled.svg`
  position: absolute;
`;
const Defs = () => (
  <Hidden width="0" height="0">
    <defs>
      <Grad id="gBlue" a="#5ac8fa" b="#2f6fed" /><Grad id="gWhite" a="#f6f6f8" b="#d7dce2" />
      <Grad id="gGreen" a="#86ef7d" b="#55b843" /><Grad id="gMail" a="#2f6ce8" b="#5cc4fa" />
      <Grad id="gLaunch" a="#cdd6e2" b="#bcc9d8" /><Grad id="gPaper" a="#ffffff" b="#f2f1ee" />
      <Grad id="gSafari" a="#4bb2f5" b="#2a63d9" /><Grad id="gSil" a="#ffffff" b="#d9d9da" />
      <Grad id="gTv" a="#2d3834" b="#0e1011" /><Grad id="gMusic" a="#ee6a7b" b="#e83b47" />
      <Grad id="gStore" a="#55bdf2" b="#2a63dc" /><Grad id="gGear" a="#d6dee3" b="#8f8e8d" />
      <Grad id="gBrown" a="#b39a62" b="#a07d4c" /><Grad id="gSub" a="#4b4b4a" b="#454443" />
      <Grad id="gCube" a="#5fd6fa" b="#5fa6e6" /><Grad id="gDisc" a="#f3a13a" b="#f0606f" />
      <Grad id="gFire" a="#ffdf3f" m="#ff7a2f" b="#d9278a" /><Grad id="gOrb" a="#8a4bea" b="#5b5fe0" />
      <Grad id="gYel" a="#fbdc63" b="#f4c53a" /><Grad id="gVmB" a="#4a97de" b="#215fa6" /><Grad id="gVmR" a="#e3504a" b="#b3201d" />
      <Grad id="gTrash" a="#e9e9ea" b="#c9c9cb" /><Grad id="gCog" a="#f0f1f4" b="#b9bbc3" />
    </defs>
  </Hidden>
);

const Finder = ({ size }) => (
  <Tile fill="url(#gBlue)" size={size}>
    <path d="M35 .5H49a14.500 14.500 0 0 1 14.500 14.500V49A14.500 14.500 0 0 1 49 63.500H39.500c-1.500-8-2.300-16-2-26H27C27.500 22 30 9 35 .5z" fill="url(#gWhite)" />
    <path d="M17 18v6M47 18v6" stroke="#1d2733" strokeWidth="2.600" strokeLinecap="round" />
    <path d="M13 43c10 10 28 10 38 0" stroke="#1d2733" strokeWidth="2.600" fill="none" strokeLinecap="round" />
  </Tile>
);
const Launchpad = () => {
  const cols = ["#6fd64b", "#f5b53a", "#ef8d2f", "#d8352b", "#8e9092", "#ef4a66", "#a04ad8", "#2f9df5", "#5bc493"];
  return <Tile fill="url(#gLaunch)">{cols.map((f, i) => <rect key={i} x={10 + (i % 3) * 16} y={11 + Math.floor(i / 3) * 15.5} width="12.500" height="12" rx="3" fill={f} />)}</Tile>;
};
const Safari = () => (
  <Tile fill="url(#gSil)">
    <circle cx="32" cy="31.500" r="28" fill="url(#gSafari)" />
    <circle cx="32" cy="31.500" r="25" fill="none" stroke="#e6f2fb" strokeWidth="3.500" strokeDasharray=".8 1.800" />
    <path d="M52 16L29 29l6 6z" fill="#e8463b" /><path d="M14 48l15-19 6 6z" fill="#f4f6f8" />
  </Tile>
);
const Messages = () => (
  <Tile fill="url(#gGreen)"><path d="M32 11c13 0 23.500 8.500 23.500 19S45 49.500 32 49.500c-2.500 0-5-.3-7-.9-2 2-5 3.700-8 3.900 1.500-1.500 2.500-3.800 2.500-6-7-3.500-11-9.500-11-16.500C8.500 19.500 19 11 32 11z" fill="url(#gSil)" /></Tile>
);
const Mail = () => (
  <Tile fill="url(#gMail)"><rect x="10" y="17.500" width="44" height="29" rx="3.500" fill="#f3f4f5" /><path d="M11 19l17 16c2.500 2.200 5.500 2.200 8 0l17-16M11 46l14-14M53 46L39 32" stroke="#a9adb3" strokeWidth="1.500" fill="none" /></Tile>
);
const Maps = () => (
  <Tile fill="#6cc658">
    <path d="M.5 15A14.500 14.500 0 0 1 15 .5h3v36L.5 30z" fill="#74cc63" />
    <path d="M.5 30L18 52v11.500h-3A14.500 14.500 0 0 1 .5 49z" fill="#dd8cc9" />
    <path d="M18 .5h16V63.500H18z" fill="#f2f2f4" /><path d="M19.500 .5h13v34h-13z" fill="#2f7bea" />
    <path d="M34 20L63.500 48v5L52 63.500H34z" fill="#f2f2f4" /><path d="M34 63.500l4-17 14 17z" fill="#f5c83f" />
    <path d="M40 .5c1 12 8 22 23.500 24V18C53 16 47 9 46.500.5z" fill="#d5d7da" />
    <circle cx="24.500" cy="40" r="16" fill="#f4f4f6" /><circle cx="24.500" cy="40" r="13" fill="#2f7bea" /><path d="M24.500 29l7 19-7-4-7 4z" fill="#fff" />
  </Tile>
);
const Photos = () => {
  const cols = ["#f39a2d", "#f5d33b", "#b9cf3f", "#6fbf7a", "#62a9e0", "#7c7ccf", "#b57bc4", "#e8574a"];
  return <Tile fill="#fdfdfd">{cols.map((f, i) => <ellipse key={i} cx="32" cy="18" rx="8" ry="13.500" fill={f} opacity=".85" transform={`rotate(${i * 45} 32 32)`} />)}</Tile>;
};
const FaceTime = () => (
  <Tile fill="url(#gGreen)"><rect x="10" y="18" width="32" height="28" rx="7" fill="url(#gSil)" /><path d="M44 29l8-8c1-1 2-.5 2 1v20c0 1.500-1 2-2 1l-8-8z" fill="url(#gSil)" /></Tile>
);
const CalText = styled.text`
  font-family: ${SYSTEM};
  text-anchor: middle;
`;
const Calendar = () => (
  <Tile fill="url(#gPaper)">
    <path d="M.5 20V15A14.500 14.500 0 0 1 15 .5H49A14.500 14.500 0 0 1 63.500 15v5z" fill="#e9594f" />
    <CalText x="32" y="15" fontSize="12" fontWeight="600" fill="#fff">MAR</CalText>
    <CalText x="32" y="54" fontSize="39" fontWeight="300" fill="#222">8</CalText>
  </Tile>
);
const Contacts = () => (
  <svg width="68" height="64" viewBox="0 0 68 64">
    <path d="M58 8h4c3 1 4 4 4 8v8H58z" fill="#b5b7b9" /><path d="M58 24h8v10h-8z" fill="#5ba3d8" /><path d="M58 34h8v10h-8z" fill="#f08a2d" /><path d="M58 44h8v8c0 3-2 4-4 4h-4z" fill="#63c250" />
    <rect width="63.500" height="64" rx="13" fill="url(#gBrown)" />
    <circle cx="34" cy="31.500" r="20" fill="none" stroke="#80683f" strokeWidth="1.500" />
    <circle cx="34" cy="27.500" r="7" fill="#86693d" /><path d="M20 46c2-9 26-9 28 0-6 7-22 7-28 0z" fill="#86693d" />
  </svg>
);
const Reminders = () => (
  <Tile fill="url(#gPaper)">{[["#2f7bf0", 16], ["#e24b3f", 32], ["#ef9a38", 48]].map(([f, y]) => (
    <g key={y}><circle cx="12.500" cy={y} r="3.800" fill={f} /><circle cx="12.500" cy={y} r="5.500" fill="none" stroke={f} strokeWidth="1" /><path d={`M24 ${y}h34`} stroke="#c4c4c4" strokeWidth="1.300" /></g>
  ))}</Tile>
);
const Notes = ({ size }) => (
  <Tile fill="#f3f1ed" size={size}><path d="M.5 17V15A14.500 14.500 0 0 1 15 .5H49A14.500 14.500 0 0 1 63.500 15v2z" fill="url(#gYel)" /><path d="M1 17.500h62" stroke="#b9a97a" strokeWidth="1" /><path d="M2 20h60" stroke="#b0aca3" strokeWidth="1.200" strokeDasharray="1 1.500" /><path d="M1 32h62M1 48.500h62" stroke="#cfccc6" strokeWidth="1.500" /></Tile>
);
const Freeform = () => (
  <Tile fill="#fff"><circle cx="26" cy="38" r="19" fill="url(#gDisc)" /><rect x="21" y="8.500" width="36" height="34.500" rx="4" fill="url(#gCube)" opacity=".9" /><path d="M12 41c3-8 9-17 14-17 4 0-3 14 2 14s7-13 11-13c3 0-1 13 3 13 5 0 7-3 8-7 2-1 5-3 7-3" fill="none" stroke="#17324f" strokeWidth="3" /></Tile>
);
const AppleTv = () => (
  <Tile fill="url(#gTv)">
    <path d="M22 19c0 2-2 4.500-4.500 4.500C17.500 21 19.500 19 22 19zM26 27c-4 2-3.500 8 .8 10-1.200 3.500-3 6-5 6s-2.300-1-4.300-1-2.500 1-4.300 1C10 42.500 7 33 10 28c2-3.500 6-3.500 8-2.200 2.500-1.300 6-1.300 8 1.200z" fill="#fff" />
    <text x="29" y="42" textLength="26" lengthAdjust="spacingAndGlyphs" fontFamily="Inter" fontWeight="500" fontSize="27" fill="#fff">tv</text>
  </Tile>
);
const Music = () => (
  <Tile fill="url(#gMusic)"><path d="M44.500 15v27" stroke="#fff" strokeWidth="3.500" /><path d="M22.500 15.500c0-1.500.8-2.200 2-2.500L44 9.800c1.500-.3 2.300.4 2.300 2v5.500l-23.800 5z" fill="#fff" /><path d="M24.200 17v30" stroke="#fff" strokeWidth="3.500" /><ellipse cx="19.500" cy="47.500" rx="6.500" ry="5" fill="#fff" /><ellipse cx="40" cy="43" rx="6.500" ry="5" fill="#fff" /></Tile>
);
const AppStore = () => (
  <Tile fill="url(#gStore)"><g stroke="#fff" strokeWidth="5" strokeLinecap="round"><path d="M36 14L22 38M28 14l21 35M12.500 39.500h24M44 39.500h7.500M17.500 46l-1.500 3" /></g></Tile>
);
const Settings = () => (
  <Tile fill="url(#gGear)"><circle cx="32" cy="32" r="27" fill="#343434" /><circle cx="32" cy="32" r="25.500" fill="none" stroke="#9b9b9b" strokeWidth="3" strokeDasharray="1.500 1.300" /><circle cx="32" cy="32" r="19.500" fill="none" stroke="#a8a8a8" strokeWidth="4" /><circle cx="32" cy="32" r="15" fill="#4a4a4a" /><path d="M32 32h19M32 32l-9.500-16.500M32 32l-9.500 16.500" stroke="#b0b0b0" strokeWidth="3" /><circle cx="32" cy="32" r="4" fill="#7a7a7a" stroke="#b0b0b0" /></Tile>
);
const Firefox = () => (
  <Tile fill="#22143c">
    <path d="M39 3c6 6 8 10 8.500 15 3-1 4-3 4-5 5 7 8 14 8 23a27.500 24 0 0 1-55 2c0-6 2-12 6-16 0-3 1-6 3-8 1 3 2 4 4 5 6-1 10-1 13 1 0-7 3-13 8.500-17z" fill="url(#gFire)" />
    <circle cx="32" cy="34" r="12" fill="url(#gOrb)" /><path d="M12 22c5 1 8 2 11 5 3-2 6-1 8 0-2 3-6 4-9 6-1 5 2 9 7 11-9 1-17-7-17-22z" fill="#ff9a2f" />
  </Tile>
);
const Fusion = () => (
  <Tile fill="#fff"><path d="M10 6.500h29a4 4 0 0 1 4 4V22H32v-4H18v16h8v9.500H10a4 4 0 0 1-4-4v-29a4 4 0 0 1 4-4z" fill="url(#gVmB)" /><path d="M36 20.500h18a4 4 0 0 1 4 4v30a4 4 0 0 1-4 4H25a4 4 0 0 1-4-4V41h9v8h18V31H36z" fill="url(#gVmR)" /><path d="M16 16h14l-4 4.500 14 17 5-5v17H30l5-6-14-17-5 5z" fill="#fff" stroke="#2a4c7a" strokeWidth=".6" /></Tile>
);
const Chrome = () => (
  <Tile fill="#fdf8f6"><circle cx="32" cy="32" r="27.500" fill="#4ba150" /><path d="M32 32L8.200 18.200A27.500 27.500 0 0 1 55.800 18.200H32z" fill="#d94f43" /><path d="M32 18.500h24.100A27.500 27.500 0 0 1 31 59.500L44 38z" fill="#f2c045" /><path d="M8.200 18.200L20.500 38.500 32 32z" fill="#d94f43" /><circle cx="32" cy="32" r="13.500" fill="#fff" /><circle cx="32" cy="32" r="10.500" fill="#3f7fe8" /></Tile>
);
const GearApp = () => {
  const teeth = Array.from({ length: 10 }, (_, i) => i * 36);
  return (
    <Overhang width="74" height="72" viewBox="0 0 74 72" $m="-5px 0 0 -6px">
      <path d="M2 2h38c19 0 32 14 32 34S59 70 40 70h-4C16 70 2 56 2 36z" fill="#f4f6fa" stroke="#42587d" strokeWidth="4" />
      <path d="M4 4l32 64h4c12 0 21-6 26-16z" fill="#c5d3ec" opacity=".6" />
      {teeth.map((a) => <rect key={a} x="32.500" y="11" width="9" height="12" rx="2" fill="#d3d4da" stroke="#77797f" transform={`rotate(${a} 37 36)`} />)}
      <circle cx="37" cy="36" r="19" fill="url(#gCog)" stroke="#8c8e95" /><circle cx="37" cy="36" r="10.500" fill="#b4c4e4" stroke="#77797f" />
    </Overhang>
  );
};
const Terminal = () => (
  <Tile fill="#c3cdd2"><rect x="2.500" y="2.500" width="59" height="59" rx="12.500" fill="#060606" /><rect x="7" y="7" width="50" height="50" rx="8" fill="#242424" /><path d="M11 12.500l7 4-7 4" fill="none" stroke="#fff" strokeWidth="2.400" /><path d="M21 24h10" stroke="#fff" strokeWidth="2" /></Tile>
);
const Sublime = ({ size }) => (
  <Tile fill="url(#gSub)" size={size}><path d="M15 41l34-12.500V41L15 54z" fill="#f59b32" /><path d="M27 36.700L49 28.500l-4 6z" fill="#c97a1e" /><path d="M15 23l34 12V41l-4-3-30-9z" fill="#f59b32" /><path d="M15 22L49 9.500v13L15 35z" fill="#f59b32" /></Tile>
);
const Trash = () => (
  <Overhang width="60" height="76" viewBox="0 0 60 76" $m="-7px 0 0 3px">
    <path d="M6 12L14 3l8 3 8-5 8 4 9-2 8 10-5 7H10z" fill="#e4e3e2" /><path d="M12 9l7 8M22 4l5 12M35 6l-4 10M44 5l4 9M16 6l8 3M40 8l10 3" stroke="#54514e" strokeWidth="1.600" />
    <path d="M2 12c12 7 44 7 56 0l-7 58c-4 6-38 6-42 0z" fill="url(#gTrash)" opacity=".94" /><path d="M14 20l4 48M46 20l-4 48M30 22v48" stroke="#fff" strokeWidth="3" opacity=".35" />
    <ellipse cx="30" cy="12" rx="28" ry="7" fill="none" stroke="#f3f3f4" strokeWidth="1.200" />
  </Overhang>
);

const Preview = ({ kind }) => {
  const dark = kind === "code";
  const y = kind === "doc" ? 8 : dark ? 11 : 14;
  const h = kind === "doc" ? 48 : dark ? 41 : 36;
  return (
    <svg width="76" height="64" viewBox="0 0 76 64">
      <rect x="0" y={y} width="75" height={h} fill={dark ? "#303a47" : "#fdfdfd"} />
      <rect x="0" y={y} width="75" height={dark ? 1.5 : 4} fill={dark ? "#dfe0e2" : "#ece8ea"} />
      {!dark && <rect x="0" y={y + 4} width={kind === "doc" ? 20 : 11} height={h - 4} fill="#ebe6e8" />}
      {kind === "finder" && <g fill="#999">{[17, 26, 35, 43, 52, 61].map((x) => <rect key={x} x={x} y="20.500" width="3.500" height="5" />)}<rect x="16" y="30" width="5" height="5" /></g>}
      {kind === "folders" && <g fill="#5fb7ea">{[[16, 19], [25, 19], [43, 18.500], [52, 18.500], [60, 18], [69, 18], [34, 36], [43, 36], [52, 36], [43, 45]].map(([x, yy]) => <rect key={`${x}-${yy}`} x={x} y={yy} width="5" height="4" />)}</g>}
      {kind === "doc" && <g stroke="#999" strokeWidth=".8"><path d="M38 19h14M24 25h20M24 28h14M24 35h18M24 41h12M24 46h26M24 49h26M24 53h26M3 14h10M3 20h14M3 26h12M3 32h14M3 40h14" /></g>}
      {dark && <g stroke="#8b6f86" strokeWidth=".8"><path d="M4 15h5M4 19h14M20 19h14M4 24h8" /></g>}
    </svg>
  );
};

const APPS = [
  [Finder, "#0c1430"], [Launchpad], [Safari], [Messages], [Mail], [Maps], [Photos], [FaceTime], [Calendar],
  [Contacts], [Reminders], [Notes, "#7a1410"], [Freeform], [AppleTv], [Music], [AppStore], [Settings, null, "1"],
  [Firefox, "#7a1410"], [Fusion],
];
const EXTRA = [[Chrome, true], [GearApp], [Terminal, true], [Sublime, true]];
const MINIS = [["finder", Finder], ["folders", Finder], ["doc", Notes], ["code", Sublime]];

function Dock() {
  return (
    <DockBar>
      <Defs />
      {APPS.map(([Icon, dot, badge], i) => (
        <DockItem key={i}>
          <Icon />
          {dot && <Dot $c={dot} />}
          {badge && <Badge><T $system $s={18} $lh={22} $c="#fff">{badge}</T></Badge>}
        </DockItem>
      ))}
      <DockSep $l={10} $r={26} />
      {EXTRA.map(([Icon, dot], i) => (
        <DockItem key={i}><Icon />{dot && <Dot />}</DockItem>
      ))}
      <DockSep $l={8} $r={22} />
      {MINIS.map(([kind, App]) => (
        <Thumbnail key={kind}><Preview kind={kind} /><MiniApp><App size={25} /></MiniApp></Thumbnail>
      ))}
      <Trash />
    </DockBar>
  );
}

export default function App() {
  return (
    <Desktop>
      <Global />
      <Wallpaper />
      <TopBar />
      <BackWindow />
      <Window>
        <Browser />
        <Page>
          <Header />
          <Body>
            <SideNav />
            <Content />
            <InfoRail />
          </Body>
          <Footer />
          <AccessDialog />
        </Page>
      </Window>
      <Dock />
      <Arrows />
    </Desktop>
  );
}
